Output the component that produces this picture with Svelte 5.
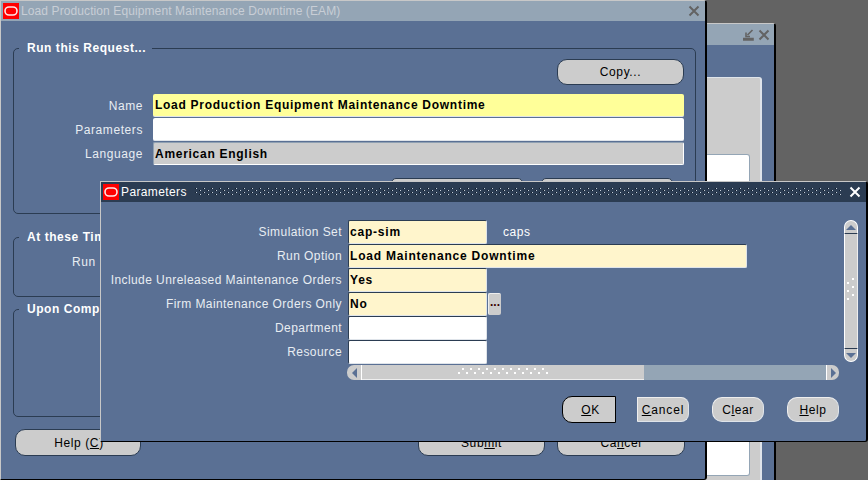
<script>
  const rows = [
    { label: 'Simulation Set', value: 'cap-sim', kind: 'req', note: 'caps' },
    { label: 'Run Option', value: 'Load Maintenance Downtime', kind: 'req wide' },
    { label: 'Include Unreleased Maintenance Orders', value: 'Yes', kind: 'req' },
    { label: 'Firm Maintenance Orders Only', value: 'No', kind: 'req', lov: true },
    { label: 'Department', value: '', kind: '' },
    { label: 'Resource', value: '', kind: '' }
  ];
</script>

{#snippet logo()}
  <svg class="logo" width="16" height="16" viewBox="0 0 16 16">
    <rect width="16" height="16" fill="#f00" />
    <rect x="2" y="4" width="12" height="8" rx="4" fill="none" stroke="#fff" stroke-width="1.6" opacity=".9" />
  </svg>
{/snippet}

{#snippet closeX(color)}
  <svg width="12" height="12" viewBox="0 0 12 12">
    <path d="M1.5 1.5 10.5 10.5M10.5 1.5 1.5 10.5" stroke={color} stroke-width="2" fill="none" />
  </svg>
{/snippet}

<div class="desktop">
  <section class="win back">
    <header class="title inactive">
      <svg class="restore" width="12" height="12" viewBox="0 0 12 12">
        <path d="M0 11H10V9.6H0ZM9.5 1 4.5 6M3 3.5V7.5H7" stroke="#636363" stroke-width="1.6" fill="none" />
      </svg>
      {@render closeX('#636363')}
    </header>
    <div class="back-body">
      <div class="back-panel"><div class="back-white"></div></div>
    </div>
  </section>

  <section class="win main">
    <header class="title inactive">
      {@render logo()}
      <span class="caption">Load Production Equipment Maintenance Downtime (EAM)</span>
      {@render closeX('#636363')}
    </header>
    <div class="main-body">
      <fieldset class="group first">
        <legend>Run this Request...</legend>
        <div class="copy-row"><button class="btn big">Copy...</button></div>
        <div class="form">
          <span class="lbl">Name</span><div class="fld yellow">Load Production Equipment Maintenance Downtime</div>
          <span class="lbl">Parameters</span><div class="fld white"></div>
          <span class="lbl">Language</span><div class="fld grey">American English</div>
        </div>
        <div class="hidden-row">
          <button class="btn mid"></button>
          <button class="btn mid"></button>
        </div>
      </fieldset>
      <fieldset class="group second">
        <legend>At these Times...</legend>
        <span class="lbl run">Run</span>
      </fieldset>
      <fieldset class="group third">
        <legend>Upon Completion...</legend>
      </fieldset>
      <div class="footer">
        <button class="btn help">Help (<u>C</u>)</button>
        <div class="footer-right">
          <button class="btn submit">Sub<u>m</u>it</button>
          <button class="btn cancel">Ca<u>n</u>cel</button>
        </div>
      </div>
    </div>
  </section>

  <section class="win params">
    <header class="title active">
      {@render logo()}
      <span class="caption">Parameters</span>
      <svg class="grip" height="10" aria-hidden="true">
        <defs>
          <pattern id="gr" width="8" height="10" patternUnits="userSpaceOnUse">
            <rect x="0" y="1" width="1" height="1" fill="#0f1a28" /><rect x="1" y="1" width="1" height="1" fill="#c6d0da" />
            <rect x="4" y="3" width="1" height="1" fill="#0f1a28" /><rect x="5" y="3" width="1" height="1" fill="#c6d0da" />
            <rect x="0" y="5" width="1" height="1" fill="#0f1a28" /><rect x="1" y="5" width="1" height="1" fill="#c6d0da" />
            <rect x="4" y="7" width="1" height="1" fill="#0f1a28" /><rect x="5" y="7" width="1" height="1" fill="#c6d0da" />
          </pattern>
        </defs>
        <rect width="100%" height="100%" fill="url(#gr)" />
      </svg>
      {@render closeX('#fff')}
    </header>
    <div class="params-body">
      <div class="params-top">
        <div class="pform">
          {#each rows as r}
            <span class="lbl">{r.label}</span>
            <div class="pcell">
              <div class="pfld {r.kind}">{r.value}</div>
              {#if r.note}<span class="note">{r.note}</span>{/if}
              {#if r.lov}<button class="lov">...</button>{/if}
            </div>
          {/each}
        </div>
        <div class="vbar">
          <div class="vend up"><i class="tri-up"></i></div>
          <div class="vthumb">
            <svg width="8" height="26" viewBox="0 0 8 26">
              {#each [0, 8, 16] as y}
                <rect x="0" y={y + 4} width="2" height="2" fill="#fff" /><rect x="5" y={y} width="2" height="2" fill="#fff" />
              {/each}
            </svg>
          </div>
          <div class="vend down"><i class="tri-down"></i></div>
        </div>
      </div>
      <div class="hbar">
        <div class="hend left"><i class="tri-left"></i></div>
        <div class="hthumb">
          <svg width="92" height="10"><rect width="92" height="10" fill="url(#hg)" />
            <defs><pattern id="hg" width="16" height="10" patternUnits="userSpaceOnUse">
              <rect x="5" y="1" width="2" height="2" fill="#fff" /><rect x="13" y="1" width="2" height="2" fill="#fff" />
              <rect x="1" y="5" width="2" height="2" fill="#fff" /><rect x="9" y="5" width="2" height="2" fill="#fff" />
            </pattern></defs>
          </svg>
        </div>
        <div class="htrack"></div>
        <div class="hend right"><i class="tri-right"></i></div>
      </div>
      <div class="pbtns">
        <button class="btn ok"><u>O</u>K</button>
        <button class="btn pb cancel2"><u>C</u>ancel</button>
        <button class="btn pb">C<u>l</u>ear</button>
        <button class="btn pb"><u>H</u>elp</button>
      </div>
    </div>
  </section>
</div>

<style>
  :global(body) { margin: 0; }
  .desktop {
    position: relative; width: 868px; height: 480px; overflow: hidden;
    background: #636363;
    font: 12px/1 "Liberation Sans", Arial, sans-serif;
    letter-spacing: .58px;
    color: #fff;
  }
  .win {
    position: absolute; box-sizing: border-box; display: flex; flex-direction: column;
    background: #5a7094;
    border-top: 1px solid #c8c8c8; border-left: 1px solid #c8c8c8;
    border-right: 2px solid #000; border-bottom: 1px solid #000;
    border-top-right-radius: 3px;
    border-bottom-right-radius: 3px;
  }
  .back { left: 560px; top: 23px; width: 216px; height: 470px; }
  .main { left: 0; top: 0; width: 707px; height: 480px; }
  .params { left: 100px; top: 181px; width: 768px; height: 261px; border-right-width: 2px; }

  .title { display: flex; align-items: center; flex: none; padding-left: 2px; padding-right: 5px; box-sizing: border-box; }
  .inactive { background: #94a5b5; color: #c8ced6; height: 20px; justify-content: flex-end; }
  .active { background: #2b3c52; color: #fff; height: 20px; margin-top: 0; }
  .back .title { height: 21px; gap: 3px; padding-right: 4px; }
  .caption { margin-left: 2px; white-space: nowrap; flex: 1; letter-spacing: .1px; }
  .active .caption { flex: none; letter-spacing: .38px; }
  .logo { flex: none; }
  .grip { flex: 1; margin: 0 6px 0 8px; min-width: 0; }

  .back-body { flex: 1; padding: 32px 12px 0 0; }
  .back-panel { height: 100%; background: #ccc; border-top: 1px solid #dfe4ea; border-right: 2px solid #dfe4ea; border-top-right-radius: 3px; padding: 76px 10px 0 0; box-sizing: border-box; }
  .back-white { height: 320px; background: #fff; border-right: 1px solid #94a5b5; border-bottom: 1px solid #94a5b5; border-top: 1px solid #94a5b5; border-radius: 3px; }

  .main-body { flex: 1; padding: 0 9px 0 12px; display: flex; flex-direction: column; min-height: 0; }
  .group {
    margin: 0; padding: 0; min-width: 0; box-sizing: border-box;
    border: 1px solid #2b3c52; border-radius: 5px;
    position: relative;
  }
  .group legend { margin-left: 5px; padding: 0 6px 0 8px; font-weight: bold; line-height: 14px; letter-spacing: .55px; color: #fff; }
  .group.first { margin-top: 20px; height: 173px; }
  .group.second { margin-top: 16px; height: 67px; }
  .group.third { margin-top: 5px; height: 115px; }
  .copy-row { display: flex; justify-content: flex-end; padding: 4px 11px 0 0; }
  .form { display: grid; grid-template-columns: 129px 531px; column-gap: 10px; row-gap: 1px; margin-top: 9px; align-items: center; }
  .lbl { text-align: right; white-space: nowrap; color: #e8edf2; }
  .fld {
    box-sizing: border-box; height: 23px; border-radius: 2px; padding: 0 0 0 2px;
    display: flex; align-items: center; color: #000; font-weight: bold; letter-spacing: .72px;
    border-bottom: 1px solid #dfe4ea;
  }
  .yellow { background: #ffff99; }
  .white { background: #fff; }
  .grey { background: #ccc; border: 1px solid #8fa0b2; border-right-color: #fff; border-bottom-color: #fff; padding-left: 1px; }
  .hidden-row { display: flex; justify-content: flex-end; gap: 18px; margin-top: 13px; padding-right: 22px; }
  .run { position: absolute; left: 58px; top: 12px; }
  .btn {
    box-sizing: border-box; background: #ccc; color: #000; padding: 0;
    border: 1px solid #2b3c52; border-radius: 10px;
    font: inherit; letter-spacing: .6px;
    display: flex; align-items: center; justify-content: center;
  }
  .big { width: 127px; height: 26px; }
  .mid { width: 132px; height: 26px; border-radius: 5px; }
  .footer { display: flex; justify-content: space-between; margin-top: 12px; padding: 0 11px 0 2px; }
  .footer-right { display: flex; gap: 12px; }
  .help { width: 126px; height: 27px; padding-left: 2px; }
  .submit { width: 127px; height: 27px; }
  .cancel { width: 128px; height: 27px; }

  .params-body { flex: 1; display: flex; flex-direction: column; padding: 0 9px 0 0; }
  .params-top { display: flex; justify-content: space-between; padding-top: 18px; }
  .pform { display: grid; grid-template-columns: 241px auto; column-gap: 6px; align-items: center; grid-auto-rows: 24px; }
  .pform .lbl { letter-spacing: .43px; }
  .pcell { display: flex; align-items: center; }
  .pfld {
    box-sizing: border-box; width: 139px; height: 24px; display: flex; align-items: center; padding-left: 1px;
    background: #fff; color: #000; font-weight: bold; letter-spacing: .8px;
    border: 1px solid; border-color: #2b3c52 #dfe4ea #dfe4ea #2b3c52; border-radius: 2px;
  }
  .pfld.req { background: #fff5cc; }
  .pfld.wide { width: 399px; }
  .note { margin-left: 16px; }
  .lov {
    box-sizing: border-box; width: 13px; height: 22px; margin-left: 1px; padding: 0 0 6px; background: #ccc; border: 0;
    border-radius: 2px; color: #3a0000; font: bold 12px/1 "Liberation Sans", sans-serif; letter-spacing: 0;
    border-top: 1px solid #eee; border-left: 1px solid #eee;
  }
  .vbar { width: 14px; height: 142px; display: flex; flex-direction: column; margin-right: -1px; }
  .vend { box-sizing: border-box; height: 14px; background: #ccc; border: 1px solid #fff; display: flex; align-items: center; justify-content: center; }
  .vend.up { border-radius: 7px 7px 0 0; border-bottom: 1px solid #2b3c52; }
  .vend.down { border-radius: 0 0 7px 7px; border-top: 1px solid #2b3c52; }
  .vthumb { flex: 1; box-sizing: border-box; background: #ccc; border-left: 1px solid #fff; border-right: 1px solid #eee; display: flex; align-items: center; justify-content: center; }
  .tri-up, .tri-down, .tri-left, .tri-right { display: block; width: 0; height: 0; border: 5px solid transparent; }
  .tri-up { border-bottom-color: #5a7094; border-top-width: 0; }
  .tri-down { border-top-color: #5a7094; border-bottom-width: 0; }
  .tri-left { border-right-color: #5a7094; border-left-width: 0; }
  .tri-right { border-left-color: #5a7094; border-right-width: 0; }
  .hbar { display: flex; height: 15px; margin: 1px 18px 0 246px; }
  .hend { box-sizing: border-box; width: 15px; background: #ccc; display: flex; align-items: center; justify-content: center; flex: none; }
  .hend.left { border-radius: 7px 0 0 7px; border-right: 1px solid #fff; }
  .hend.right { border-radius: 0 7px 7px 0; border-left: 1px solid #fff; width: 13px; }
  .hthumb { width: 282px; box-sizing: border-box; background: #ccc; border-bottom: 1px solid #eee; display: flex; align-items: center; justify-content: center; flex: none; }
  .htrack { flex: 1; background: #94a5b5; }
  .pbtns { display: flex; align-items: center; margin: 16px 18px 0 0; justify-content: flex-end; gap: 23px; }
  .ok { width: 54px; height: 27px; border-color: #000; border-radius: 10px 0 0 10px; margin-right: -2px; padding-left: 3px; }
  .pb { width: 52px; height: 25px; border-color: #eee; border-right-color: #dfe4ea; border-bottom-color: #dfe4ea; }
  .cancel2 { border-radius: 0 8px 8px 0; letter-spacing: .85px; }
</style>
